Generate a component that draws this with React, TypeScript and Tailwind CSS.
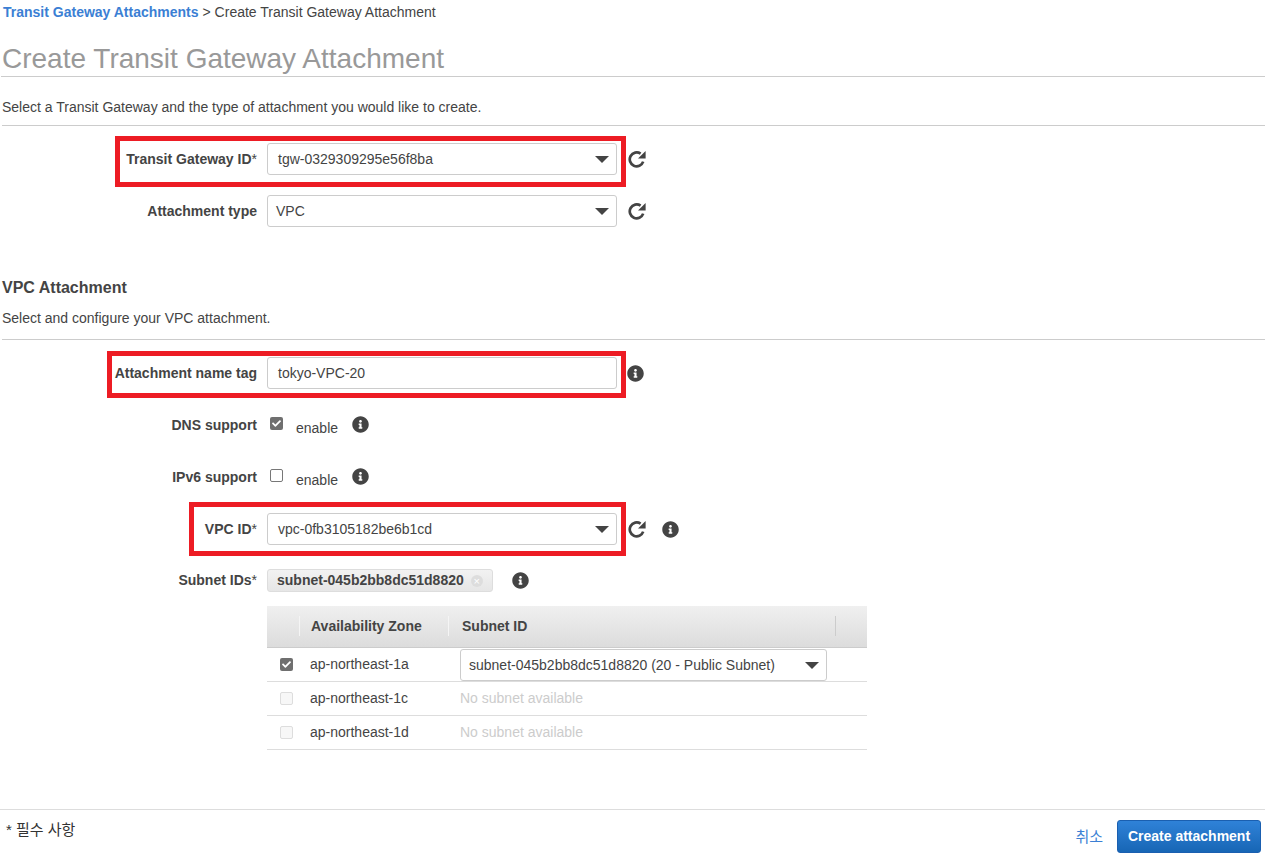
import { FaInfoCircle, FaCheck } from "react-icons/fa";
import type { ReactNode } from "react";

const font = { fontFamily: '"Liberation Sans", "Noto Sans CJK KR", sans-serif' };

function Caret() {
  return (
    <svg width="14" height="7" viewBox="0 0 14 7" className="shrink-0">
      <path d="M0 0h14L7 7z" fill="#444" />
    </svg>
  );
}

function Refresh() {
  return (
    <svg width="18" height="18" viewBox="0 0 18 18" className="block">
      <path d="M15.2 11.6A6.9 6.9 0 1 1 12.6 3.7" fill="none" stroke="#444" strokeWidth="2.7" />
      <path d="M17.6 1v7.6H10z" fill="#444" />
    </svg>
  );
}

function Info() {
  return <FaInfoCircle className="text-[#444] w-[17px] h-[17px]" />;
}

function Select({ value, narrow }: { value: string; narrow?: boolean }) {
  return (
    <div className="w-[350px] h-[32px] bg-white border border-[#ccc] rounded-[3px] flex items-center justify-between pl-[10px] pr-[7px] text-[14px] text-[#444]">
      <span className={narrow ? "-ml-[2px]" : ""}>{value}</span>
      <Caret />
    </div>
  );
}

function Label({ children }: { children: ReactNode }) {
  return (
    <div className="w-[257px] shrink-0 text-right font-bold text-[14px] text-[#444] pr-0">
      {children}
    </div>
  );
}

function Check({ checked, disabled }: { checked?: boolean; disabled?: boolean }) {
  if (checked) {
    return (
      <span className="block w-[13px] h-[13px] rounded-[2px] bg-[#6f6f6f] flex items-center justify-center">
        <FaCheck className="text-white w-[9px] h-[9px]" />
      </span>
    );
  }
  return (
    <span
      className={
        disabled
          ? "block w-[13px] h-[13px] rounded-[2px] border border-[#ddd] bg-[#f7f7f7]"
          : "block w-[13px] h-[13px] rounded-[2px] border border-[#777] bg-white"
      }
    />
  );
}

// red annotation frame drawn over a form row
function Mark({ className }: { className: string }) {
  return <div className={"absolute border-[5px] border-[#ed1c24] pointer-events-none " + className} />;
}

const zones = [
  { zone: "ap-northeast-1c" },
  { zone: "ap-northeast-1d" },
];

export default function App() {
  return (
    <div style={font} className="w-[1265px] h-[865px] bg-white overflow-hidden flex flex-col text-[#444]">
      <div className="h-[24px] flex items-center pl-[3px] text-[14px]">
        <span className="font-bold text-[#3b7fd4]">Transit Gateway Attachments</span>
        <span className="ml-[4px] text-[#444]">&gt; Create Transit Gateway Attachment</span>
      </div>

      <div className="ml-[1px] pl-[1px] mt-[17px] h-[36px] border-b border-[#ccc] text-[28px] leading-[36px] text-[#999]">
        Create Transit Gateway Attachment
      </div>

      <div className="ml-[2px] h-[49px] border-b border-[#ccc] pt-[22px] text-[14px] leading-[16px]">
        Select a Transit Gateway and the type of attachment you would like to create.
      </div>

      <div className="relative mt-[17px] h-[32px] flex items-center">
        <Mark className="left-[115px] top-[-7px] w-[511px] h-[51px]" />
        <Label>
          Transit Gateway ID<span className="font-normal">*</span>
        </Label>
        <div className="ml-[10px]">
          <Select value="tgw-0329309295e56f8ba" />
        </div>
        <div className="ml-[11px]">
          <Refresh />
        </div>
      </div>

      <div className="mt-[20px] h-[32px] flex items-center">
        <Label>Attachment type</Label>
        <div className="ml-[10px]">
          <Select value="VPC" narrow />
        </div>
        <div className="ml-[11px]">
          <Refresh />
        </div>
      </div>

      <div className="ml-[2px] mt-[51px] text-[16px] leading-[20px] font-bold">VPC Attachment</div>
      <div className="ml-[2px] h-[42px] border-b border-[#ccc] pt-[12px] text-[14px] leading-[16px]">
        Select and configure your VPC attachment.
      </div>

      <div className="relative mt-[17px] h-[32px] flex items-center">
        <Mark className="left-[107px] top-[-6px] w-[519px] h-[47px]" />
        <Label>Attachment name tag</Label>
        <div className="ml-[10px] w-[350px] h-[32px] border border-[#ccc] rounded-[3px] flex items-center pl-[10px] text-[14px]">
          tokyo-VPC-20
        </div>
        <div className="ml-[10px]">
          <Info />
        </div>
      </div>

      <div className="mt-[26px] h-[20px] flex items-center">
        <Label>DNS support</Label>
        <div className="ml-[13px] -mt-[3px]">
          <Check checked />
        </div>
        <span className="ml-[13px] mt-[7px] text-[14px]">enable</span>
        <div className="ml-[14px] -mt-[2px]">
          <Info />
        </div>
      </div>

      <div className="mt-[32px] h-[20px] flex items-center">
        <Label>IPv6 support</Label>
        <div className="ml-[13px] -mt-[3px]">
          <Check />
        </div>
        <span className="ml-[13px] mt-[7px] text-[14px]">enable</span>
        <div className="ml-[14px] -mt-[2px]">
          <Info />
        </div>
      </div>

      <div className="relative mt-[26px] h-[32px] flex items-center">
        <Mark className="left-[189px] top-[-11px] w-[437px] h-[54px]" />
        <Label>
          VPC ID<span className="font-normal">*</span>
        </Label>
        <div className="ml-[10px]">
          <Select value="vpc-0fb3105182be6b1cd" />
        </div>
        <div className="ml-[11px]">
          <Refresh />
        </div>
        <div className="ml-[16px]">
          <Info />
        </div>
      </div>

      <div className="mt-[24px] h-[23px] flex items-center">
        <Label>
          Subnet IDs<span className="font-normal">*</span>
        </Label>
        <div className="ml-[10px] h-[23px] w-[226px] bg-gradient-to-b from-[#f2f2f2] to-[#e6e6e6] border border-[#ddd] rounded-[3px] flex items-center pl-[9px] font-bold text-[14px]">
          subnet-045b2bb8dc51d8820
          <span className="ml-[7px] w-[12px] h-[12px] rounded-full bg-[#ddd] text-white text-[11px] leading-[12px] text-center font-normal">
            ×
          </span>
        </div>
        <div className="ml-[19px]">
          <Info />
        </div>
      </div>

      <div className="ml-[267px] mt-[14px] w-[600px] text-[14px]">
        <div className="h-[42px] pb-[2px] bg-gradient-to-b from-[#f0f0f0] to-[#dcdcdc] border-b border-[#ccc] flex items-center font-bold">
          <div className="w-[33px] h-[20px] border-r border-[#f5f5f5]" />
          <div className="w-[149px] h-[20px] border-r border-[#f5f5f5] pl-[11px] leading-[20px]">Availability Zone</div>
          <div className="w-[387px] h-[20px] border-r border-[#ccc] pl-[13px] leading-[20px]">Subnet ID</div>
        </div>
        <div className="h-[34px] border-b border-[#ddd] flex items-center">
          <div className="w-[43px] pl-[13px]">
            <Check checked />
          </div>
          <div className="w-[150px]">ap-northeast-1a</div>
          <div className="w-[367px] h-[32px] mt-[1px] border border-[#ccc] rounded-[3px] flex items-center justify-between pl-[8px] pr-[7px]">
            subnet-045b2bb8dc51d8820 (20 - Public Subnet)
            <Caret />
          </div>
        </div>
        {zones.map((z) => (
          <div key={z.zone} className="h-[34px] border-b border-[#ddd] flex items-center">
            <div className="w-[43px] pl-[13px]">
              <Check disabled />
            </div>
            <div className="w-[150px]">{z.zone}</div>
            <div className="text-[#ccc]">No subnet available</div>
          </div>
        ))}
      </div>

      <div className="mt-[59px] h-[56px] border-t border-[#ddd] flex justify-between">
        <div className="pl-[6px] pt-[9px] text-[15px] text-[#333]">* 필수 사항</div>
        <div className="flex items-start pt-[10px] pr-[4px]">
          <span className="mt-[6px] text-[15px] text-[#3b7fd4]">취소</span>
          <button className="ml-[14px] w-[144px] h-[33px] rounded-[3px] border border-[#1a5fb0] bg-gradient-to-b from-[#2f82d8] to-[#1766b5] text-white font-bold text-[14px]">
            Create attachment
          </button>
        </div>
      </div>
    </div>
  );
}
